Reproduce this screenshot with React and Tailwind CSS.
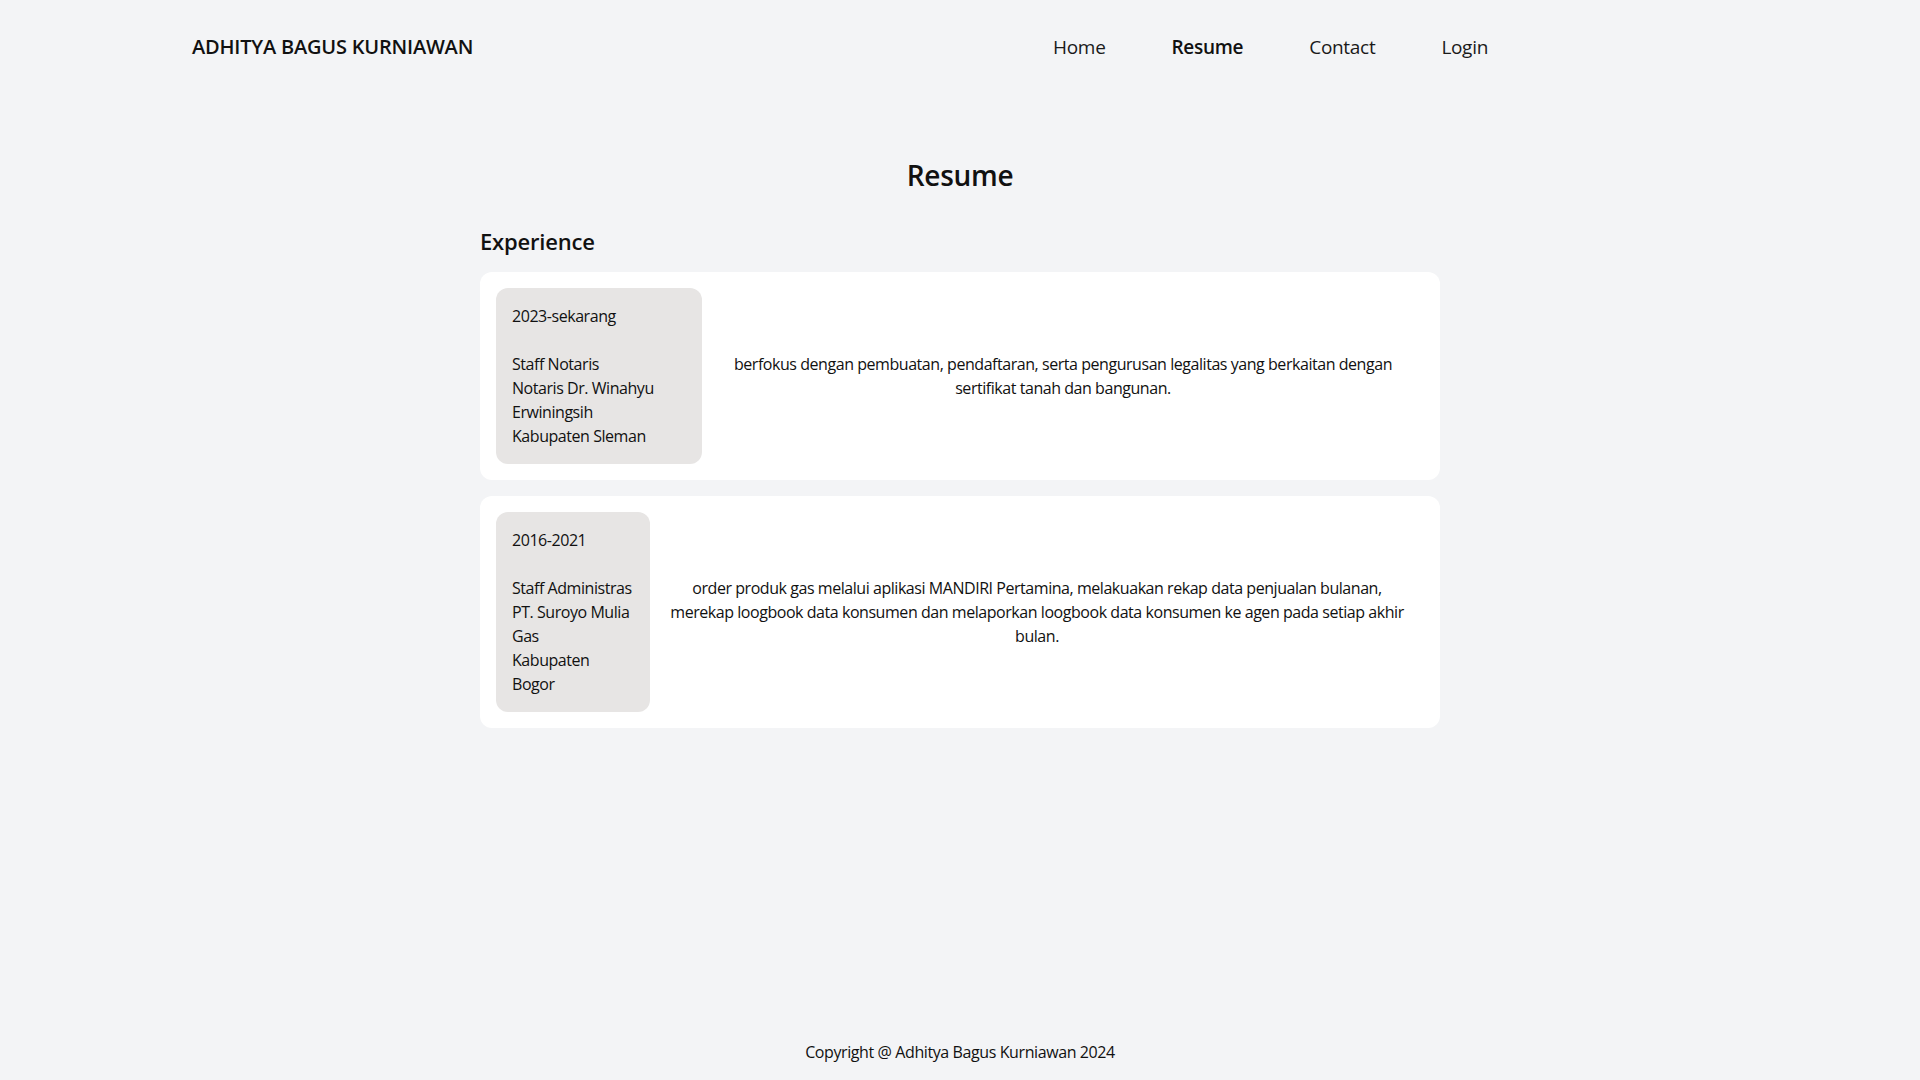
import React from "react";

const experiences = [
  {
    period: "2023-sekarang",
    lines: ["Staff Notaris", "Notaris Dr. Winahyu", "Erwiningsih", "Kabupaten Sleman"],
    width: "w-[206px]",
    desc: (
      <>
        berfokus dengan pembuatan, pendaftaran, serta pengurusan legalitas yang berkaitan dengan
        <br />
        sertifikat tanah dan bangunan.
      </>
    ),
  },
  {
    period: "2016-2021",
    lines: ["Staff Administras", "PT. Suroyo Mulia", "Gas", "Kabupaten", "Bogor"],
    width: "w-[154px]",
    desc: (
      <>
        order produk gas melalui aplikasi MANDIRI Pertamina, melakuakan rekap data penjualan bulanan,
        <br />
        merekap loogbook data konsumen dan melaporkan loogbook data konsumen ke agen pada setiap akhir
        <br />
        bulan.
      </>
    ),
  },
];

export default function App() {
  return (
    <div
      className="min-h-screen flex flex-col bg-[#f3f4f6] text-[#111111]"
      style={{ fontFamily: '"Segoe UI", "Open Sans", "Noto Sans", sans-serif' }}
    >
      <header className="flex items-center justify-between pl-[192px] pr-[432px] pt-[33px] pb-8">
        <div className="text-xl leading-7 font-semibold tracking-[-0.2px] whitespace-nowrap">ADHITYA BAGUS KURNIAWAN</div>
        <nav className="flex items-center gap-[66px] text-[19px] leading-7 tracking-[-0.3px]">
          <a className="text-[#1a1a1a]">Home</a>
          <a className="font-semibold">Resume</a>
          <a className="text-[#1a1a1a]">Contact</a>
          <a className="text-[#1a1a1a]">Login</a>
        </nav>
      </header>

      <main className="flex-1 mt-16">
        <h1 className="text-[28px] leading-9 tracking-[-0.3px] font-semibold text-center mb-8">Resume</h1>
        <section className="w-[960px] mx-auto">
          <h2 className="text-[22px] leading-8 tracking-[-0.2px] font-semibold mb-[15px]">Experience</h2>
          <div className="flex flex-col gap-4 tracking-[-0.45px]">
            {experiences.map((e) => (
              <div key={e.period} className="bg-white rounded-xl p-4 flex items-center">
                <div className={`${e.width} shrink-0 bg-[#e7e5e4] rounded-xl p-4 text-base leading-6`}>
                  <div className="whitespace-nowrap">{e.period}</div>
                  <div className="h-6" />
                  {e.lines.map((l) => (
                    <div key={l} className="whitespace-nowrap">{l}</div>
                  ))}
                </div>
                <p className="flex-1 px-4 text-center text-base leading-6 whitespace-nowrap">{e.desc}</p>
              </div>
            ))}
          </div>
        </section>
      </main>

      <footer className="py-4 text-center text-base leading-6 tracking-[-0.4px]">Copyright @ Adhitya Bagus Kurniawan 2024</footer>
    </div>
  );
}
